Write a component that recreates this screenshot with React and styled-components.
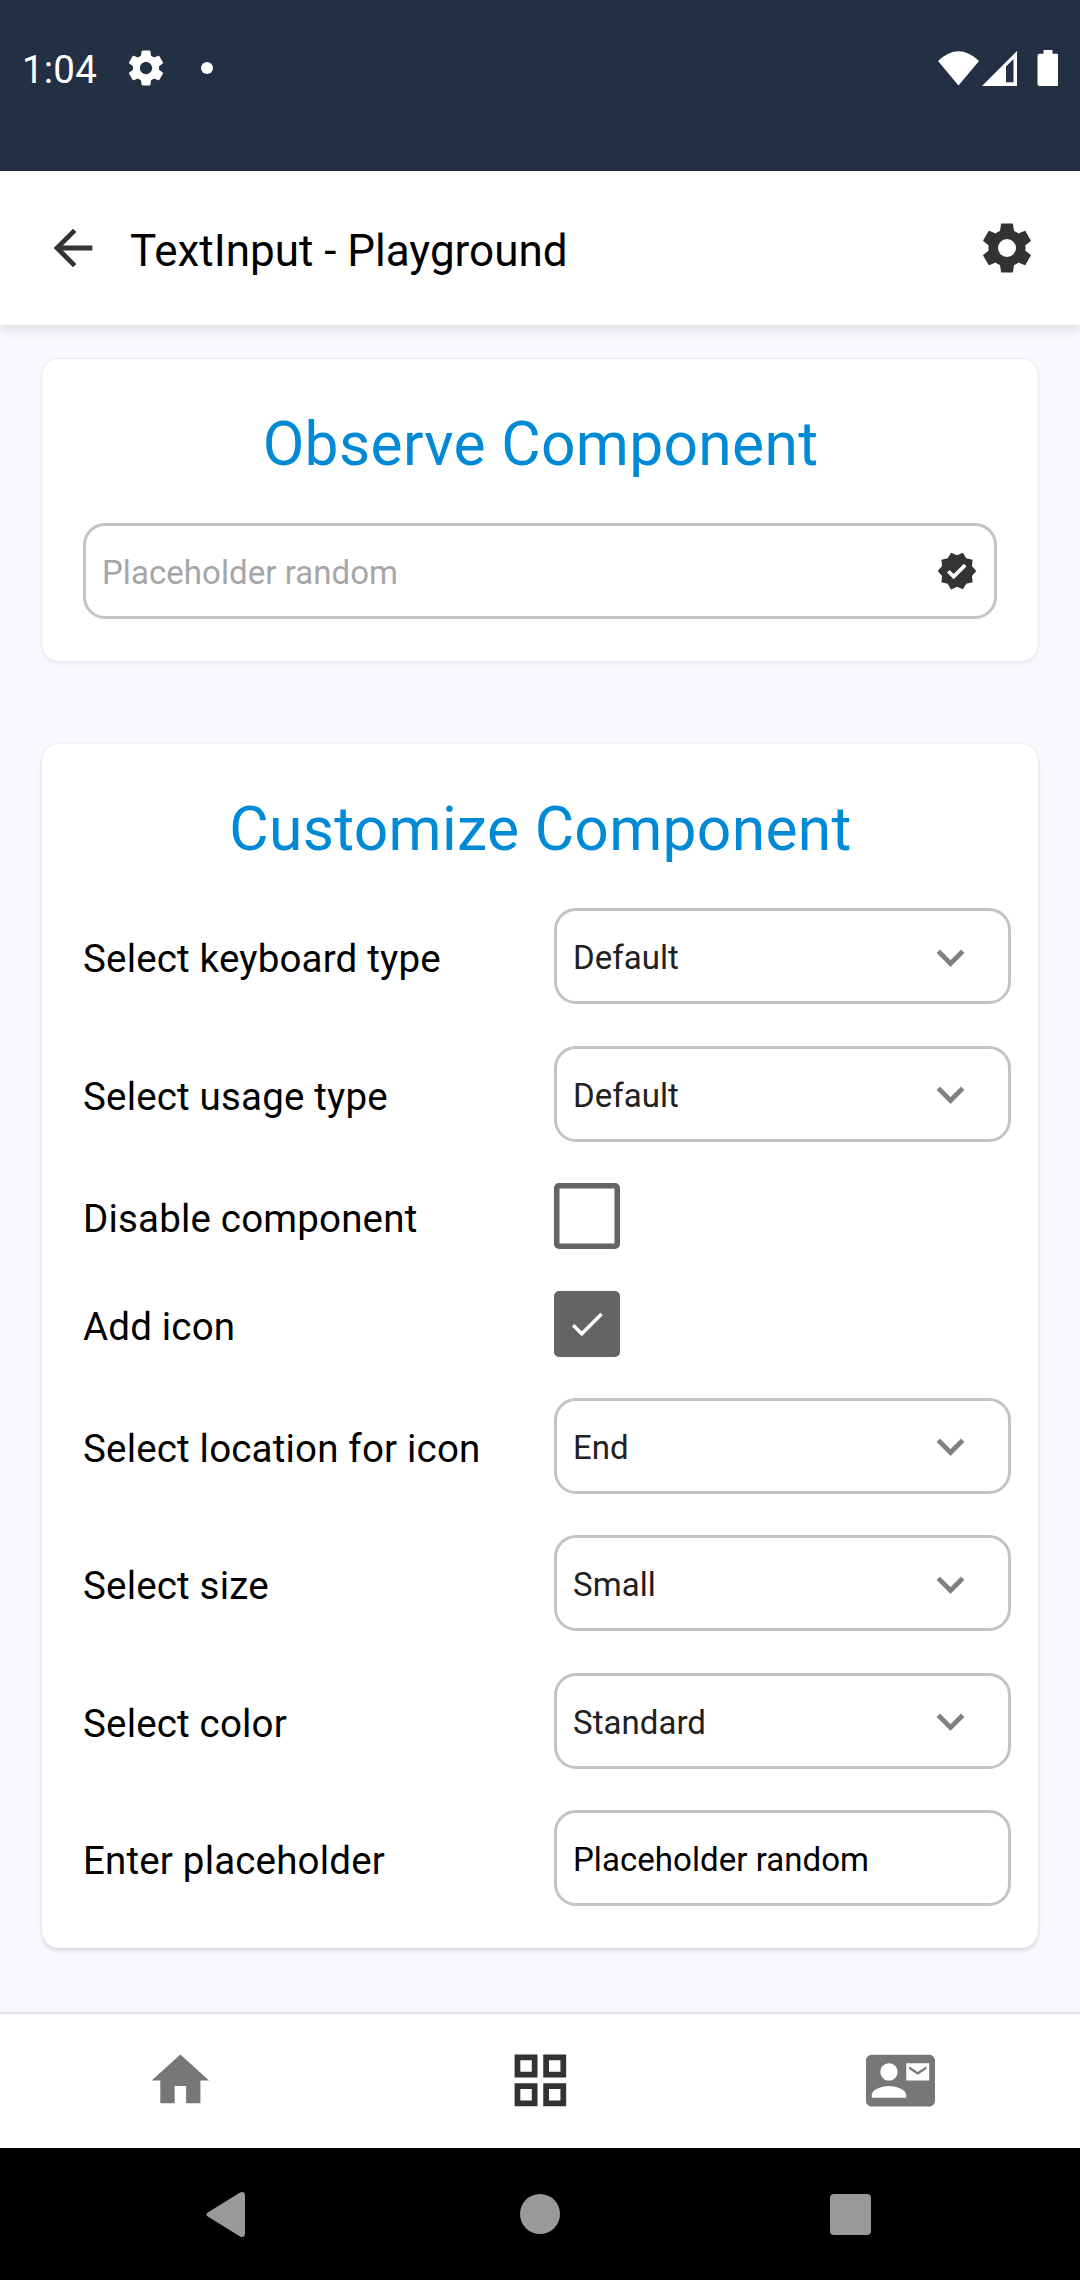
import React from "react";
import styled, { createGlobalStyle } from "styled-components";
import {
  MdArrowBack,
  MdCheck,
  MdContactMail,
  MdGridView,
  MdHome,
  MdVerified,
} from "react-icons/md";

const GlobalStyle = createGlobalStyle`
  * { box-sizing: border-box; }
  body { margin: 0; background: #f8f9fd; }
  svg { display: block; flex: none; }
`;

const Screen = styled.div`
  width: 1080px;
  height: 2280px;
  display: flex;
  flex-direction: column;
  overflow: hidden;
  background: #f8f9fd;
  color: #000;
  font-family: Roboto, "Noto Sans", sans-serif;
`;

const StatusBar = styled.div`
  flex: none;
  height: 171px;
  padding: 46px 22px 0;
  display: flex;
  justify-content: space-between;
  align-items: flex-start;
  background: #232f43;
  color: #fff;
`;

const StatusGroup = styled.div`
  height: 43px;
  display: flex;
  align-items: center;
`;

const Clock = styled.span`
  width: 103px;
  padding-top: 4px;
  font-size: 38.5px;
  letter-spacing: 0.2px;
  line-height: 45px;
`;

const Dot = styled.span`
  width: 12px;
  height: 12px;
  margin-left: 34px;
  border-radius: 50%;
  background: #fff;
`;

const Header = styled.header`
  position: relative;
  flex: none;
  height: 154px;
  padding: 0 44px;
  display: flex;
  align-items: center;
  background: #fff;
  box-shadow: 0 4px 12px rgba(20, 20, 50, 0.13);
`;

const Title = styled.h1`
  flex: 1;
  margin: 0;
  padding: 6px 0 0 28px;
  font-size: 44px;
  font-weight: 400;
  line-height: 52px;
`;

const Content = styled.main`
  flex: 1;
  padding: 34px 42px 0;
  display: flex;
  flex-direction: column;
  gap: 83px;
`;

const Card = styled.section`
  height: ${(p) => p.$height}px;
  padding: ${(p) => (p.$wide ? "50px 27px 0 41px" : "50px 41px 0")};
  border-radius: 16.5px;
  background: #fff;
  box-shadow: 0 ${(p) => (p.$wide ? 3 : 1.5)}px 4px
      rgba(20, 20, 60, ${(p) => (p.$wide ? 0.13 : 0.08)}),
    0 0 2px rgba(20, 20, 60, 0.1);
`;

const CardTitle = styled.h2`
  width: 915px;
  margin: 0 0 43px;
  color: #0089d4;
  font-size: 60.5px;
  font-weight: 400;
  letter-spacing: 0.33px;
  line-height: 71px;
  text-align: center;
`;

const Rows = styled.div`
  display: flex;
  flex-direction: column;
  gap: 41.4px;
  padding-top: 0.4px;
`;

const Row = styled.div`
  display: grid;
  grid-template-columns: 471px 457px;
  align-items: center;
`;

const Label = styled.label`
  padding-top: 5px;
  font-size: 38.5px;
  letter-spacing: 0.18px;
  line-height: 45px;
`;

const Field = styled.div`
  height: 96px;
  padding: 0 ${(p) => p.$endSpace || 16}px 0 16px;
  display: flex;
  align-items: center;
  justify-content: space-between;
  border: 3px solid #c4c4c4;
  border-radius: 22px;
  background: #fff;
  color: ${(p) => p.$color || "#000"};
`;

const FieldText = styled.span`
  padding-top: 3px;
  font-size: 33px;
  letter-spacing: 0.05px;
  line-height: 39px;
`;

const ChevronIcon = styled.svg`
  width: 55px;
  height: 55px;
  margin-top: 2px;
  fill: #808080;
  stroke: #808080;
  stroke-width: 0.15px;
`;

const Checkbox = styled.div`
  width: 66px;
  height: 66px;
  display: flex;
  align-items: center;
  justify-content: center;
  border: 5px solid #636466;
  border-radius: 5px;
  background: ${(p) => (p.$checked ? "#636466" : "#fff")};
  box-shadow: inset 0 0 0 0.5px #636466;
  color: #fff;
`;

const TabBar = styled.nav`
  flex: none;
  height: 136px;
  padding-bottom: 1.5px;
  display: grid;
  grid-template-columns: repeat(3, 1fr);
  justify-items: center;
  align-items: center;
  border-top: 2px solid #e2e3e5;
  background: #fff;
  box-shadow: 0 -1px 4px rgba(20, 20, 50, 0.04);
`;

const ContactTab = styled.span`
  padding-left: 1px;
`;

const SystemBar = styled.div`
  flex: none;
  height: 132px;
  padding: 0 209px 0 206px;
  display: flex;
  align-items: center;
  justify-content: space-between;
  background: #000;
`;

const RoundKey = styled.span`
  width: 40px;
  height: 40px;
  margin-left: 5px;
  border-radius: 50%;
  background: #999;
`;

const SquareKey = styled.span`
  width: 41px;
  height: 41px;
  border-radius: 4px;
  background: #999;
`;

const StatusGear = () => (
  <svg width="42" height="42" viewBox="0 0 24 24" fill="#fff">
    <path d="M19.43 12.98c.04-.32.07-.64.07-.98s-.03-.66-.07-.98l2.11-1.65c.19-.15.24-.42.12-.64l-2-3.46c-.12-.22-.39-.3-.61-.22l-2.49 1c-.52-.4-1.08-.73-1.69-.98l-.38-2.65C14.46 2.18 14.25 2 14 2h-4c-.25 0-.46.18-.49.42l-.38 2.65c-.61.25-1.17.59-1.69.98l-2.49-1c-.23-.09-.49 0-.61.22l-2 3.46c-.13.22-.07.49.12.64l2.11 1.65c-.04.32-.07.65-.07.98s.03.66.07.98l-2.11 1.65c-.19.15-.24.42-.12.64l2 3.46c.12.22.39.3.61.22l2.49-1c.52.4 1.08.73 1.69.98l.38 2.65c.03.24.24.42.49.42h4c.25 0 .46-.18.49-.42l.38-2.65c.61-.25 1.17-.59 1.69-.98l2.49 1c.23.09.49 0 .61-.22l2-3.46c.12-.22.07-.49-.12-.64l-2.11-1.65zM12 15.5c-1.93 0-3.5-1.57-3.5-3.5s1.57-3.5 3.5-3.5 3.5 1.57 3.5 3.5-1.57 3.5-3.5 3.5z" />
  </svg>
);

const HeaderGear = () => (
  <svg width="58" height="58" viewBox="-29 -29 58 58" fill="#333">
    {[0, 60, 120, 180, 240, 300].map((angle) => (
      <path
        key={angle}
        transform={`rotate(${angle})`}
        d="M-5.200 -24.400H5.200Q5.900 -24.400 6 -23.700L7 -17Q9 -16.200 11.100 -14.500L4.600 -7.500H-4.600L-11.100 -14.500Q-9 -16.200 -7 -17L-6 -23.700Q-5.900 -24.400 -5.200 -24.400Z"
      />
    ))}
    <circle r="13" fill="none" stroke="#333" strokeWidth="8" />
    <circle r="9" fill="#fff" />
  </svg>
);

const Signals = () => (
  <svg width="120" height="36" viewBox="0 0 120 36" fill="#fff">
    <path d="M0 11Q20.5 -8.5 41 11L20.5 35.5Z" />
    <path fillRule="evenodd" d="M44 36L79 1V36ZM68 16.5V32.2H75.5V9Z" />
    <path d="M105.500 0h9v3.700h4a2 2 0 0 1 2 2V34a2 2 0 0 1-2 2h-17a2 2 0 0 1-2-2V5.700a2 2 0 0 1 2-2h4z" />
  </svg>
);

const BackKey = () => (
  <svg width="39" height="45" viewBox="0 0 39 45" fill="#999">
    <path d="M34 0.600Q39 -1.500 39 4V41Q39 46.500 34 44.400L1.800 24.600Q-1 22.500 1.800 20.400Z" />
  </svg>
);

const Chevron = () => (
  <ChevronIcon viewBox="0 0 24 24">
    <path d="M7.410 8.590L12 13.170l4.590-4.580L18 10l-6 6-6-6z" />
  </ChevronIcon>
);

const Select = ({ value }) => (
  <Field $color="#212121" $endSpace={30}>
    <FieldText>{value}</FieldText>
    <Chevron />
  </Field>
);

const settings = [
  { label: "Select keyboard type", control: <Select value="Default" /> },
  { label: "Select usage type", control: <Select value="Default" /> },
  { label: "Disable component", control: <Checkbox /> },
  {
    label: "Add icon",
    control: (
      <Checkbox $checked>
        <MdCheck size={42} />
      </Checkbox>
    ),
  },
  { label: "Select location for icon", control: <Select value="End" /> },
  { label: "Select size", control: <Select value="Small" /> },
  { label: "Select color", control: <Select value="Standard" /> },
  {
    label: "Enter placeholder",
    control: (
      <Field>
        <FieldText>Placeholder random</FieldText>
      </Field>
    ),
  },
];

export default function App() {
  return (
    <Screen>
      <GlobalStyle />
      <StatusBar>
        <StatusGroup>
          <Clock>1:04</Clock>
          <StatusGear />
          <Dot />
        </StatusGroup>
        <StatusGroup>
          <Signals />
        </StatusGroup>
      </StatusBar>
      <Header>
        <MdArrowBack size={58} color="#333" />
        <Title>TextInput - Playground</Title>
        <HeaderGear />
      </Header>
      <Content>
        <Card $height={302}>
          <CardTitle>Observe Component</CardTitle>
          <Field $color="#a6a6a6">
            <FieldText>Placeholder random</FieldText>
            <MdVerified size={42} color="#333" />
          </Field>
        </Card>
        <Card $height={1204} $wide>
          <CardTitle>Customize Component</CardTitle>
          <Rows>
            {settings.map(({ label, control }) => (
              <Row key={label}>
                <Label>{label}</Label>
                {control}
              </Row>
            ))}
          </Rows>
        </Card>
      </Content>
      <TabBar>
        <MdHome size={68.75} color="#777" />
        <MdGridView size={68.75} color="#333" />
        <ContactTab>
          <MdContactMail size={69} color="#777" />
        </ContactTab>
      </TabBar>
      <SystemBar>
        <BackKey />
        <RoundKey />
        <SquareKey />
      </SystemBar>
    </Screen>
  );
}
